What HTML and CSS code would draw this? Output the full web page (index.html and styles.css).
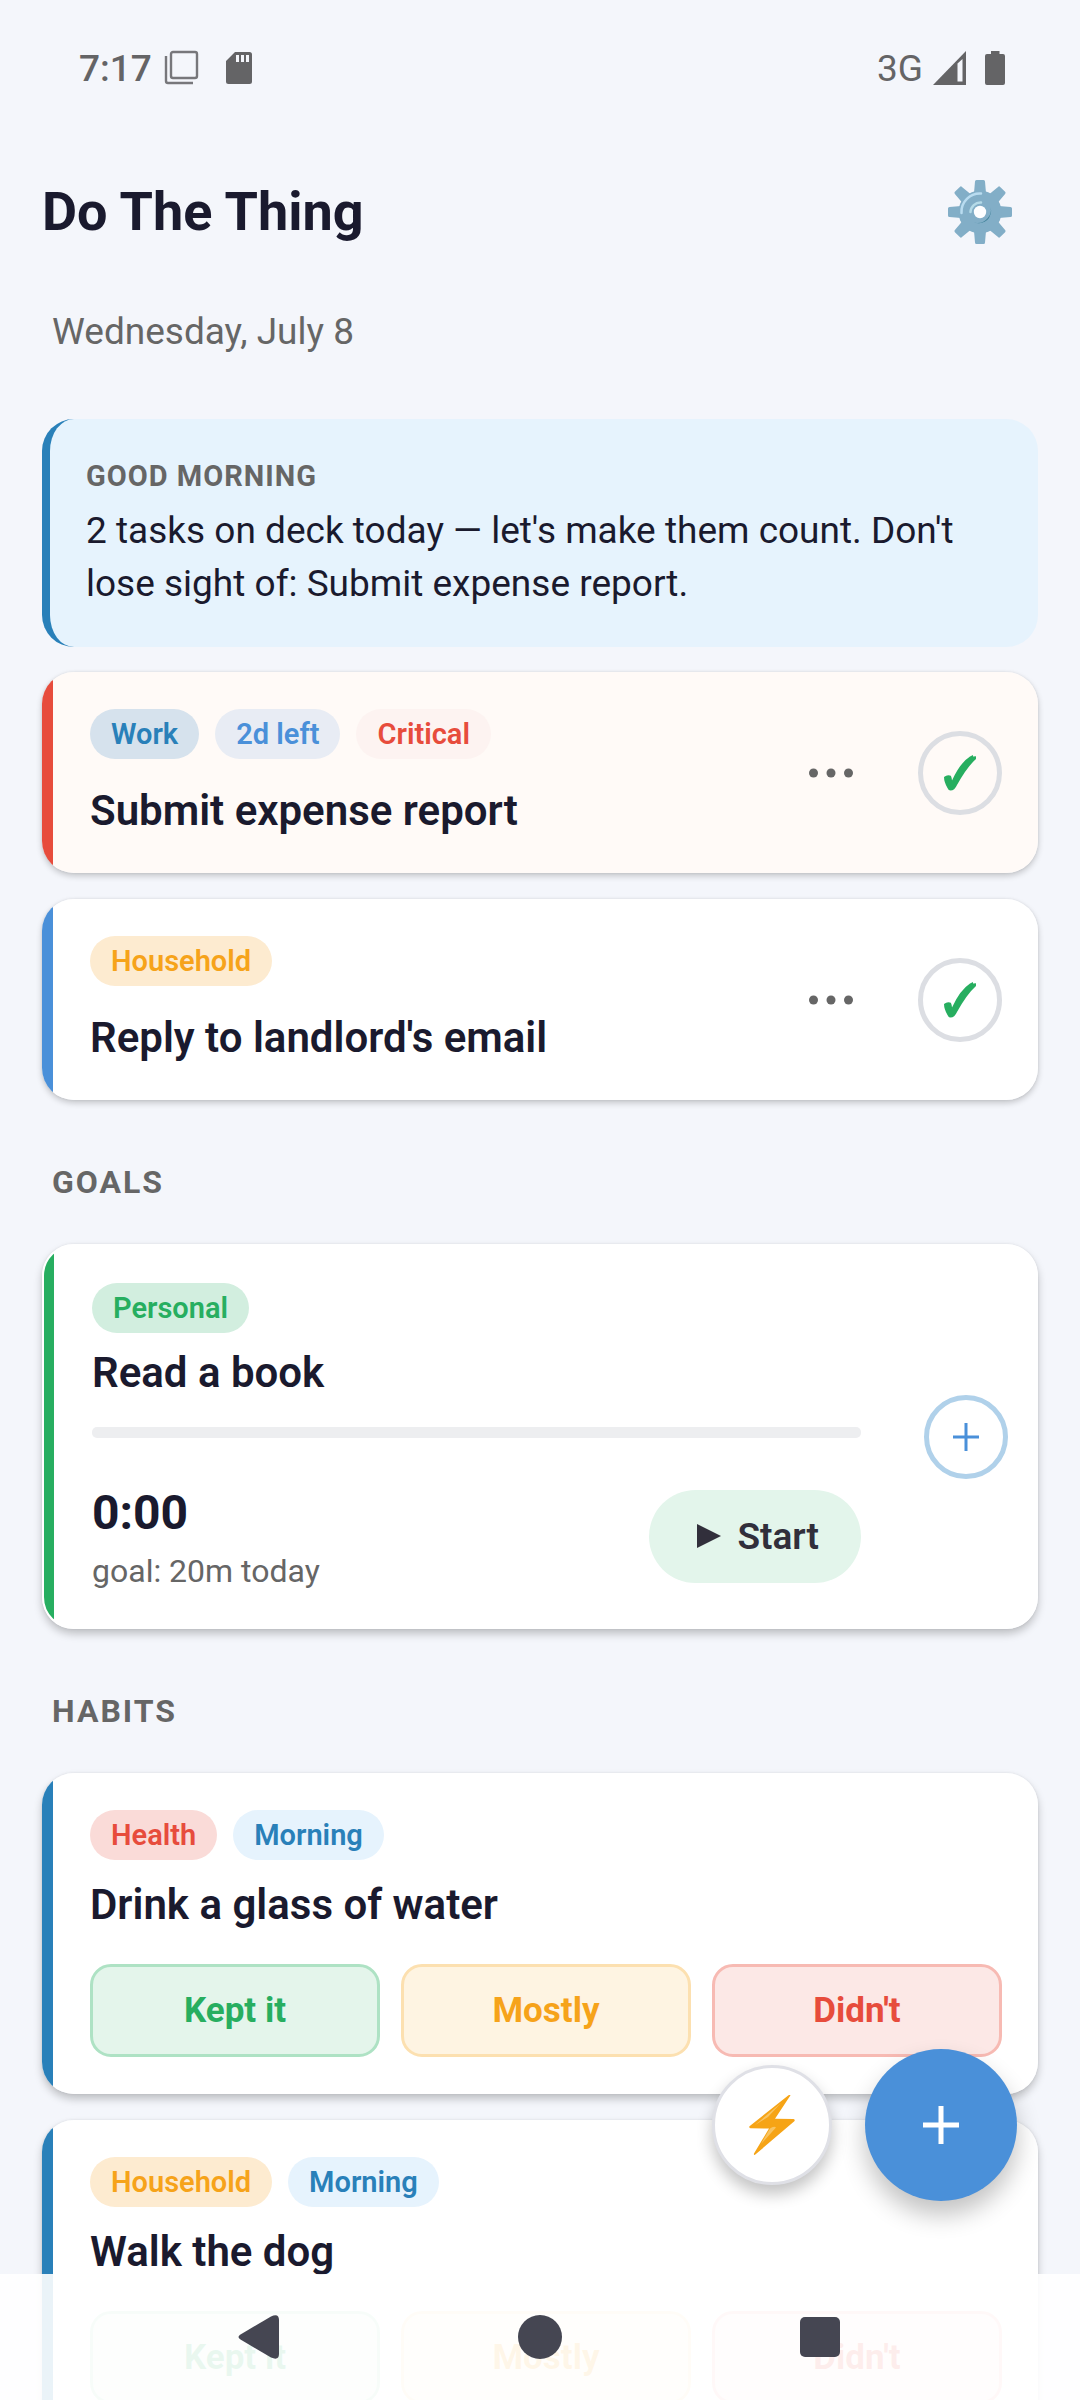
FILE: index.html
```html
<!DOCTYPE html>
<html lang="en">
<head>
<meta charset="utf-8">
<meta name="viewport" content="width=device-width, initial-scale=1">
<title>Do The Thing</title>
<link rel="stylesheet" href="styles.css">
</head>
<body>
<div class="app">
  <div class="status-bar">
    <div class="status-group">
      <span class="status-text">7:17</span>
      <svg class="status-icon status-copy" viewBox="0 0 36 36" aria-hidden="true"><rect x="7" y="2" width="26" height="26" rx="2" fill="none" stroke="#77777b" stroke-width="2.4"/><path d="M2 6v25a2 2 0 0 0 2 2h25" fill="none" stroke="#77777b" stroke-width="2.4"/></svg>
      <svg class="status-icon status-sd" viewBox="0 0 26 32" aria-hidden="true"><path d="M9 0h14.500a2.500 2.500 0 0 1 2.500 2.500v27a2.500 2.500 0 0 1-2.500 2.500H2.500A2.500 2.500 0 0 1 0 29.500V9z" fill="#646466"/><path d="M10 3h3v7h-3zM15 3h3v7h-3zM20 3h3v7h-3z" fill="#f4f6fb"/></svg>
    </div>
    <div class="status-group">
      <span class="status-network">3G</span>
      <svg class="status-icon status-signal" viewBox="0 0 33 34" aria-hidden="true"><path d="M33 0v34H0z" fill="#646466"/><path d="M24.500 12.500L29.500 8v22.500h-5z" fill="#f4f6fb"/></svg>
      <svg class="status-icon status-battery" viewBox="0 0 20 34" aria-hidden="true"><path d="M6 0h8.500v3H18a2 2 0 0 1 2 2v27a2 2 0 0 1-2 2H2a2 2 0 0 1-2-2V5a2 2 0 0 1 2-2h4z" fill="#646466"/></svg>
    </div>
  </div>

  <header class="header">
    <h1 class="header-title">Do The Thing</h1>
    <button class="icon-button" type="button" aria-label="Settings">
      <svg class="gear" viewBox="0 0 64 64" aria-hidden="true">
        <g fill="#82aec7">
          <path id="tooth" d="M27 1.500q0-1.500 1.500-1.500h7q1.500 0 1.500 1.500L38 13H26zM27 62.500q0 1.500 1.500 1.500h7q1.500 0 1.500-1.500L38 51H26z"/>
          <use href="#tooth" transform="rotate(45 32 32)"/><use href="#tooth" transform="rotate(90 32 32)"/><use href="#tooth" transform="rotate(135 32 32)"/>
          <circle cx="32" cy="32" r="21.500"/>
        </g>
        <path d="M13.500 33A18.500 18.500 0 0 1 33 13.500" fill="none" stroke="#b9dcf0" stroke-width="2.500" stroke-linecap="round"/>
        <path d="M22.500 32A10 10 0 0 1 33 22.500" fill="none" stroke="#b5dbe8" stroke-width="2.500" stroke-linecap="round"/>
        <path d="M41.500 23.500A13.500 13.500 0 0 1 26 42.500Q36 45 41 38Q45 31 41.500 23.500z" fill="#3e8198"/>
        <circle cx="32" cy="32" r="6.200" fill="#fdfeff"/>
      </svg>
    </button>
  </header>

  <main class="content">
    <p class="date">Wednesday, July 8</p>

    <section class="briefing">
      <h2 class="briefing-label">GOOD MORNING</h2>
      <p class="briefing-text">2 tasks on deck today — let's make them count. Don't lose sight of: Submit expense report.</p>
    </section>

    <article class="card task critical">
      <div class="card-body">
        <div class="chips"><span class="chip work">Work</span><span class="chip due">2d left</span><span class="chip priority">Critical</span></div>
        <h3 class="card-title task-title">Submit expense report</h3>
      </div>
      <button class="more" type="button" aria-label="More options"><svg viewBox="0 0 44 10" aria-hidden="true"><circle cx="4.500" cy="5" r="4.500"/><circle cx="22" cy="5" r="4.500"/><circle cx="39.500" cy="5" r="4.500"/></svg></button>
      <button class="round-button" type="button" aria-label="Mark done"><svg class="check" viewBox="0 0 32 36" aria-hidden="true"><path d="M0 22q3-2.500 6-1.500q1.500 0 2 5Q16 8 26 1.500L29 0v1.500L32 1.200V4Q23 12 13 30Q10.500 35.500 6.500 35.500Q4.500 35.500 3.500 33Q0 27 0 22z"/></svg></button>
    </article>

    <article class="card task normal">
      <div class="card-body">
        <div class="chips"><span class="chip household">Household</span></div>
        <h3 class="card-title task-title">Reply to landlord's email</h3>
      </div>
      <button class="more" type="button" aria-label="More options"><svg viewBox="0 0 44 10" aria-hidden="true"><circle cx="4.500" cy="5" r="4.500"/><circle cx="22" cy="5" r="4.500"/><circle cx="39.500" cy="5" r="4.500"/></svg></button>
      <button class="round-button" type="button" aria-label="Mark done"><svg class="check" viewBox="0 0 32 36" aria-hidden="true"><path d="M0 22q3-2.500 6-1.500q1.500 0 2 5Q16 8 26 1.500L29 0v1.500L32 1.200V4Q23 12 13 30Q10.500 35.500 6.500 35.500Q4.500 35.500 3.500 33Q0 27 0 22z"/></svg></button>
    </article>

    <h2 class="section-title">GOALS</h2>

    <article class="card goal">
      <div class="card-body">
        <div class="chips"><span class="chip personal">Personal</span></div>
        <h3 class="card-title">Read a book</h3>
        <div class="progress" role="progressbar" aria-valuenow="0" aria-valuemin="0" aria-valuemax="20" aria-label="Read a book"></div>
        <div class="timer-row">
          <div class="timer">
            <span class="timer-value">0:00</span>
            <span class="timer-goal">goal: 20m today</span>
          </div>
          <button class="start" type="button"><svg viewBox="0 0 24 24" aria-hidden="true"><path d="M0 0l24 12L0 24z"/></svg>Start</button>
        </div>
      </div>
      <button class="round-button add" type="button" aria-label="Add time"><svg class="plus" viewBox="0 0 28 28" aria-hidden="true"><path d="M14 0v28M1 14h26"/></svg></button>
    </article>

    <h2 class="section-title">HABITS</h2>

    <article class="card habit">
      <div class="chips"><span class="chip health">Health</span><span class="chip morning">Morning</span></div>
      <h3 class="card-title">Drink a glass of water</h3>
      <div class="answers">
        <button class="answer kept" type="button">Kept it</button>
        <button class="answer mostly" type="button">Mostly</button>
        <button class="answer missed" type="button">Didn't</button>
      </div>
    </article>

    <article class="card habit">
      <div class="chips"><span class="chip household">Household</span><span class="chip morning">Morning</span></div>
      <h3 class="card-title">Walk the dog</h3>
      <div class="answers">
        <button class="answer kept" type="button">Kept it</button>
        <button class="answer mostly" type="button">Mostly</button>
        <button class="answer missed" type="button">Didn't</button>
      </div>
    </article>
  </main>

  <div class="fabs">
    <button class="fab quick" type="button" aria-label="Quick add"><svg class="bolt" viewBox="0 0 46 60" aria-hidden="true"><path d="M41.500 .3L26 23.800l18.500 .3q2 .7 .8 2.200L6 59.800q-1.500 .4-1-1.200L20 33.500 1.500 33.200q-2.200-.8-.7-2.300L39.500 .3q1.600-.8 2 0z" fill="#f6a416"/><path d="M32 8L6 30l13-8zM12 49L21 33.500q4-3 6-1z" fill="#f8c463"/></svg></button>
    <button class="fab new" type="button" aria-label="New item"><svg class="fab-plus" viewBox="0 0 40 40" aria-hidden="true"><path d="M20 1v38M2 20h36"/></svg></button>
  </div>

  <nav class="system-nav" aria-label="System">
    <button class="nav-button" type="button" aria-label="Back"><svg viewBox="0 0 44 44" aria-hidden="true"><path d="M2.500 19.500L33 1.500Q41 -2 41 5v34q0 7-8 3.500L2.500 24.500q-4-2.500 0-5z"/></svg></button>
    <button class="nav-button" type="button" aria-label="Home"><svg viewBox="0 0 44 44" aria-hidden="true"><circle cx="22" cy="22" r="22"/></svg></button>
    <button class="nav-button" type="button" aria-label="Recents"><svg viewBox="0 0 44 44" aria-hidden="true"><rect x="2" y="2" width="40" height="40" rx="5"/></svg></button>
  </nav>
</div>
</body>
</html>
```
FILE: styles.css
```css
* { box-sizing: border-box; }

body {
  margin: 0;
  background: #f4f6fb;
  color: #1a1a2e;
  font-family: Roboto, "Noto Sans", sans-serif;
}

h1, h2, h3, p { margin: 0; }

button {
  padding: 0;
  border: 0;
  background: none;
  color: inherit;
  font: inherit;
  cursor: pointer;
}

svg { display: block; }

.app {
  position: relative;
  display: flex;
  flex-direction: column;
  height: 100vh;
  overflow: hidden;
}

/* System status bar */
.status-bar {
  display: flex;
  justify-content: space-between;
  align-items: center;
  height: 136px;
  padding: 0 75px 0 79px;
  color: #646466;
  font-size: 37px;
}

.status-group { display: flex; align-items: center; }
.status-text { font-weight: 500; }
.status-copy { width: 36px; margin-left: 12px; }
.status-sd { width: 26px; margin-left: 26px; }
.status-signal { width: 33px; margin-left: 10px; }
.status-battery { width: 20px; margin-left: 19px; }

/* App header */
.header {
  display: flex;
  justify-content: space-between;
  align-items: center;
  height: 152px;
  padding: 0 68px 0 42px;
}

.header-title { font-size: 54px; line-height: 62px; font-weight: 700; }
.gear { width: 64px; height: 64px; }

/* Scrolling list */
.content {
  flex: 1;
  min-height: 0;
  display: flex;
  flex-direction: column;
  padding: 21px 42px 0;
  overflow: auto;
  scrollbar-width: none;
}

.content > * { flex-shrink: 0; }

.date {
  padding: 0 10px;
  margin-bottom: 64px;
  color: #666;
  font-size: 37px;
  line-height: 46px;
}

.briefing {
  padding: 37px 36px;
  margin-bottom: 25px;
  border-left: 8px solid #2980b9;
  border-radius: 32px;
  background: #e6f3fd;
}

.briefing-label {
  margin-bottom: 8px;
  color: #666;
  font-size: 29px;
  line-height: 40px;
  font-weight: 700;
  letter-spacing: 1px;
}

.briefing-text { font-size: 37px; line-height: 53px; }

/* Cards */
.card {
  padding: 37px 36px 37px 48px;
  margin-bottom: 26px;
  border-radius: 32px;
  background: linear-gradient(90deg, var(--accent) 11px, var(--surface, #fff) 11px);
  box-shadow: 0 3px 6px rgba(0, 0, 0, 0.2), 0 0 3px rgba(0, 0, 0, 0.08);
}

.critical { --accent: #e74c3c; --surface: #fffaf7; }
.normal { --accent: #4a90d9; }
.habit { --accent: #2980b9; }

.task { display: flex; align-items: center; }
.card-body { flex: 1; }

.card-title { font-size: 42px; line-height: 50px; font-weight: 600; }
.task-title { margin-top: 27px; }

.chips { display: flex; gap: 16px; }

.chip {
  padding: 5px 21px;
  border-radius: 25px;
  font-size: 29px;
  line-height: 40px;
  font-weight: 600;
}

.work { background: #d6e2ed; color: #2980b9; }
.due { background: #e8ecf4; color: #4a90d9; }
.priority { background: #fdf3f1; color: #e74c3c; }
.household { background: #fdebd0; color: #f6a31a; }
.personal { background: #d2eedf; color: #27ae60; }
.health { background: #fadbd8; color: #e74c3c; }
.morning { background: #e6f3fd; color: #2980b9; }

.more { width: 106px; padding: 37px 31px; }
.more svg { fill: #666; }

.round-button {
  display: grid;
  place-items: center;
  width: 84px;
  height: 84px;
  margin-left: 34px;
  border: 5px solid #dcdee3;
  border-radius: 50%;
}

.check { width: 32px; height: 36px; fill: #27ae60; }

.section-title {
  padding: 0 10px;
  margin: 36px 0 42px;
  color: #666;
  font-size: 32px;
  line-height: 40px;
  font-weight: 700;
  letter-spacing: 2px;
}

/* Goal card */
.goal {
  display: flex;
  align-items: center;
  padding: 37px 28px 36px 48px;
  border: 2px solid #fff;
  background: linear-gradient(90deg, #27ae60 10px, #fff 10px);
  box-shadow: 0 5px 8px rgba(0, 0, 0, 0.22), 0 0 3px rgba(0, 0, 0, 0.08);
}

.goal .card-title { margin-top: 15px; }
.progress { height: 11px; margin-top: 29px; border-radius: 5px; background: #edeef0; }

.timer-row {
  display: flex;
  justify-content: space-between;
  align-items: center;
  margin-top: 43px;
}

.timer { display: flex; flex-direction: column; padding-top: 4px; }
.timer-value { font-size: 48px; line-height: 56px; font-weight: 700; }
.timer-goal { margin-top: 10px; color: #666; font-size: 32px; line-height: 40px; }

.start {
  display: flex;
  align-items: center;
  gap: 16px;
  height: 93px;
  padding: 0 42px 0 48px;
  border-radius: 47px;
  background: #e3f5eb;
  color: #312f3b;
  font-size: 37px;
  font-weight: 600;
}

.start svg { width: 24px; height: 24px; fill: #312f3b; }
.add { margin-left: 63px; border-color: #b0d1ea; }
.plus { width: 28px; height: 28px; stroke: #4a90d9; stroke-width: 3; }

/* Habit cards */
.habit {
  box-shadow: 0 5px 8px rgba(0, 0, 0, 0.22), 0 0 3px rgba(0, 0, 0, 0.08);
}

.habit .card-title { margin: 20px 0 34px; }

.answers {
  display: grid;
  grid-template-columns: repeat(3, 1fr);
  gap: 21px;
}

.answer {
  height: 93px;
  border: 3px solid;
  border-radius: 21px;
  font-size: 35px;
  font-weight: 700;
}

.kept { border-color: #aee2c4; background: #e4f5eb; color: #27ae60; }
.mostly { border-color: #fce0b0; background: #fef4e2; color: #f6a31a; }
.missed { border-color: #f7bab3; background: #fce8e6; color: #e74c3c; }

/* Floating buttons */
.fabs {
  position: absolute;
  right: 63px;
  bottom: 199px;
  display: flex;
  align-items: center;
  gap: 33px;
}

.fab { display: grid; place-items: center; border-radius: 50%; }

.quick {
  width: 120px;
  height: 120px;
  border: 3px solid #dfe0e6;
  background: #fff;
  box-shadow: 0 9px 16px rgba(0, 0, 0, 0.24);
}

.new {
  width: 152px;
  height: 152px;
  background: #4a90d9;
  box-shadow: 0 14px 24px rgba(0, 0, 0, 0.24);
}

.bolt { width: 46px; height: 60px; }
.fab-plus { width: 40px; height: 40px; stroke: #fff; stroke-width: 5; }

/* System navigation */
.system-nav {
  position: absolute;
  left: 0;
  right: 0;
  bottom: 0;
  display: flex;
  justify-content: center;
  align-items: center;
  gap: 236px;
  height: 126px;
  background: rgba(255, 255, 255, 0.9);
}

.nav-button svg { width: 44px; height: 44px; fill: #454652; }
```
